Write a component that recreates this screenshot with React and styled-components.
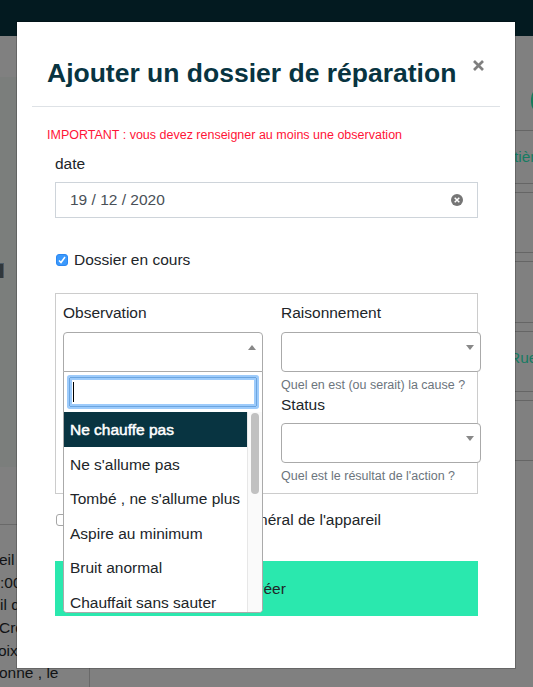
import React from 'react';
import styled, { createGlobalStyle } from 'styled-components';

const GlobalStyle = createGlobalStyle`
  * { box-sizing: border-box; }
  body {
    margin: 0;
    overflow: hidden;
    background: #808080;
    color: #212529;
    font: 15.5px/22px "Liberation Sans", Arial, sans-serif;
  }
`;

const Page = styled.div`
  position: relative;
  width: 533px;
  height: 687px;
  overflow: hidden;
`;
const TopBar = styled.header`
  height: 36px;
  background: #031a20;
`;
const Backdrop = styled.main`
  display: grid;
  grid-template-columns: 90px 1fr;
  height: 651px;
`;
const LeftPane = styled.section`
  display: flex;
  flex-direction: column;
  border-right: 1px solid #696969;
`;
const Photo = styled.div`
  height: 390px;
  margin-top: 41px;
  padding-top: 186px;
  background: #7b7e7c;
`;
const PhotoMark = styled.div`
  width: 4px;
  height: 15px;
  background: #30373c;
  border: solid #4c5a66;
  border-width: 1px 1px 0 0;
`;
const Notes = styled.div`
  margin-top: 57px;
  padding-top: 24px;
  border-top: 1px solid #696969;
  color: #111315;
`;
const NoteLine = styled.div`
  width: 100px;
  height: 22.7px;
  line-height: 22.7px;
  white-space: nowrap;
  text-indent: ${p => p.$shift || 0}px;
`;
const RightPane = styled.section`
  display: flex;
  flex-direction: column;
  align-items: flex-end;
`;
const EditButton = styled.div`
  display: flex;
  align-items: center;
  width: 13px;
  height: 29px;
  margin: 50px 0 15px;
  padding-left: 7px;
  border-radius: 15px 0 0 15px;
  background: #157a5a;
  overflow: hidden;
  svg { flex: none; }
`;
const Card = styled.div`
  width: 100%;
  height: ${p => p.$h}px;
  margin-bottom: 8px;
  padding: 15px 0 0 ${p => p.$indent || 0}px;
  border: solid #656565;
  border-width: 1px 0;
  color: #167b62;
  white-space: nowrap;
  overflow: hidden;
`;

const Modal = styled.div`
  position: absolute;
  left: 16px;
  top: 21px;
  width: 500px;
  height: 648px;
  padding: 0 15px;
  background: #fff;
  background-clip: padding-box;
  border: 1px solid rgba(0, 0, 0, 0.2);
`;
const ModalHeader = styled.div`
  display: flex;
  justify-content: space-between;
  height: 85px;
  padding: 36px 15px 0;
  border-bottom: 1px solid #dee2e6;
`;
const Title = styled.h1`
  margin: 0;
  color: #083441;
  font-size: 26.5px;
  line-height: 30px;
  letter-spacing: 0;
  white-space: nowrap;
`;
const Close = styled.button`
  width: 13px;
  height: 16px;
  padding: 0;
  border: 0;
  background: none;
  svg { display: block; }
`;
const Important = styled.p`
  height: 16px;
  margin: 20px 0 10px 15px;
  color: #ff1437;
  font-size: 12.5px;
  line-height: 16px;
`;
const Form = styled.form`
  display: flex;
  flex-direction: column;
  width: 423px;
  margin-left: 23px;
`;
const Text = styled.span`
  display: inline-block;
  white-space: nowrap;
  letter-spacing: ${p => p.$ls || 0}px;
`;
const DateInput = styled.div`
  display: flex;
  align-items: center;
  justify-content: space-between;
  height: 36px;
  margin-top: 7px;
  padding: 0 14px;
  border: 1px solid #ced4da;
  color: #495057;
`;
const CheckRow = styled.div`
  display: flex;
  align-items: center;
  height: 22px;
  margin-top: ${p => p.$mt}px;
`;
const Box = styled.span`
  display: flex;
  flex: none;
  width: 12px;
  height: 12px;
  margin: 0 6px 0 1px;
  border: 1px solid ${p => (p.$on ? '#2b87f2' : '#a6a6a6')};
  border-radius: 3px;
  background: ${p => (p.$on ? '#3b99fc' : '#fff')};
`;
const Group = styled.div`
  display: grid;
  grid-template-columns: 200px 200px;
  column-gap: 18px;
  height: 201px;
  margin-top: 22px;
  padding: 8px 0 0 7px;
  border: 1px solid #ccc;
`;
const Field = styled.div`
  position: relative;
  display: flex;
  flex-direction: column;
`;
const Select = styled.div`
  display: flex;
  flex: none;
  justify-content: flex-end;
  height: 40px;
  margin-top: ${p => p.$mt || 8}px;
  padding: 12px 6px;
  border: 1px solid #aaa;
  border-radius: ${p => (p.$open ? '4px 4px 0 0' : '4px')};
  background: #fff;
`;
const Help = styled.small`
  height: 16px;
  margin: 5px 0 1px;
  color: #6c757d;
  font-size: 12.5px;
  line-height: 16px;
  white-space: nowrap;
`;
const Dropdown = styled.div`
  position: absolute;
  z-index: 2;
  left: 0;
  top: 69px;
  width: 200px;
  height: 242px;
  border: 1px solid #aaa;
  border-radius: 0 0 4px 4px;
  background: #fff;
  overflow: hidden;
`;
const Search = styled.div`
  height: 30px;
  margin: 5px 5px 5px;
  padding: 4px 3px;
  border: 1px solid #6ba5e0;
  box-shadow: 0 0 0 2px #9dcbfb, inset 0 0 0 2px #9dcbfb;
  border-radius: 1px;
`;
const Caret = styled.div`
  width: 1px;
  height: 20px;
  background: #000;
`;
const OptionArea = styled.div`
  display: grid;
  grid-template-columns: 183px 15px;
  height: 200px;
`;
const Options = styled.ul`
  margin: 0;
  padding: 0;
  list-style: none;
  overflow: hidden;
`;
const Option = styled.li`
  height: 34.5px;
  padding-left: 6px;
  line-height: 35px;
  color: ${p => (p.$active ? '#fff' : '#212529')};
  background: ${p => (p.$active ? '#083441' : '#fff')};
  -webkit-text-stroke: ${p => (p.$active ? '0.5px #fff' : '0')};
`;
const Track = styled.div`
  padding: 1px 3px;
  border-left: 1px solid #e7e7e7;
  background: #fafafa;
`;
const Thumb = styled.div`
  width: 8px;
  height: 81px;
  border-radius: 4px;
  background: #c1c1c1;
`;
const Submit = styled.div`
  height: 55px;
  margin-top: 30px;
  background: #2ae8ae;
  line-height: 56px;
  text-align: center;
`;
const StateLabel = styled.span`
  width: 307px;
  text-align: right;
`;

const Arrow = ({ up }) => (
  <svg width="8" height="5" viewBox="0 0 8 5">
    <path d={up ? 'M0 5 4 0l4 5z' : 'M0 0h8L4 5z'} fill="#888" />
  </svg>
);

const options = [
  ['Ne chauffe pas', 0],
  ["Ne s'allume pas", 0],
  ["Tombé , ne s'allume plus", 0],
  ['Aspire au minimum', 0],
  ['Bruit anormal', 0],
  ['Chauffait sans sauter', 0],
];

export default function App() {
  return (
    <Page>
      <GlobalStyle />
      <TopBar />
      <Backdrop>
        <LeftPane>
          <Photo><PhotoMark /></Photo>
          <Notes>
            <NoteLine $shift={-1}>eil</NoteLine>
            <NoteLine>:00</NoteLine>
            <NoteLine>il de</NoteLine>
            <NoteLine $shift={-1}>Croix</NoteLine>
            <NoteLine $shift={-2}>oix-</NoteLine>
            <NoteLine $shift={-1}>onne , le</NoteLine>
          </Notes>
        </LeftPane>
        <RightPane>
          <EditButton>
            <svg width="14" height="14" viewBox="0 0 14 14" fill="none" stroke="#031a20">
              <path d="M1.5 12.5 2.5 8 8.5 2 12 5.5 6 11.5z" strokeWidth="1.5" />
              <path d="m3 8.5 2.5 2.5M4 9l5-5" strokeWidth="1.3" />
            </svg>
          </EditButton>
          <Card $h={54} $indent={424}>tière</Card>
          <Card $h={61} />
          <Card $h={62} />
          <Card $h={61} $indent={419}>Rue</Card>
          <Card $h={61} />
        </RightPane>
      </Backdrop>
      <Modal>
        <ModalHeader>
          <Title>Ajouter un dossier de réparation</Title>
          <Close type="button" aria-label="Fermer">
            <svg width="13" height="16" viewBox="0 0 13 16">
              <path d="m2 3 9 9M11 3l-9 9" stroke="#7f7f7f" strokeWidth="2.7" />
            </svg>
          </Close>
        </ModalHeader>
        <Important><Text>IMPORTANT : vous devez renseigner au moins une observation</Text></Important>
        <Form>
          <Text>date</Text>
          <DateInput>
            <Text>19 / 12 / 2020</Text>
            <svg width="12" height="12" viewBox="0 0 12 12">
              <circle cx="6" cy="6" r="6" fill="#757575" />
              <path d="m3.7 3.7 4.6 4.6m0-4.6L3.7 8.3" stroke="#fff" strokeWidth="1.5" />
            </svg>
          </DateInput>
          <CheckRow $mt={31}>
            <Box $on>
              <svg width="10" height="10" viewBox="0 0 10 10">
                <path d="m2 5.5 2 2L8 2" fill="none" stroke="#fff" strokeWidth="1.5" />
              </svg>
            </Box>
            <Text>Dossier en cours</Text>
          </CheckRow>
          <Group>
            <Field>
              <Text>Observation</Text>
              <Select $open><Arrow up /></Select>
              <Dropdown>
                <Search><Caret /></Search>
                <OptionArea>
                  <Options>
                    {options.map(([label, ls], i) => (
                      <Option key={label} $active={i === 0}><Text $ls={ls}>{label}</Text></Option>
                    ))}
                  </Options>
                  <Track><Thumb /></Track>
                </OptionArea>
              </Dropdown>
            </Field>
            <Field>
              <Text>Raisonnement</Text>
              <Select><Arrow /></Select>
              <Help><Text>Quel en est (ou serait) la cause ?</Text></Help>
              <Text>Status</Text>
              <Select $mt={7}><Arrow /></Select>
              <Help><Text>Quel est le résultat de l'action ?</Text></Help>
            </Field>
          </Group>
          <CheckRow $mt={15}>
            <Box />
            <StateLabel><Text>État général de l'appareil</Text></StateLabel>
          </CheckRow>
          <Submit>Créer</Submit>
        </Form>
      </Modal>
    </Page>
  );
}
